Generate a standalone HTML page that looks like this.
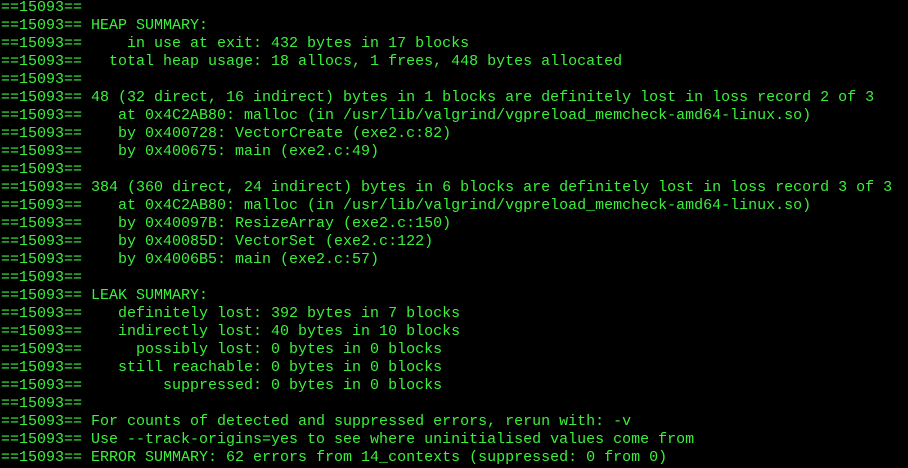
<!DOCTYPE html><html><head><style>
body{margin:0;background:#000;width:908px;height:468px;overflow:hidden}
pre{margin:0;position:absolute;left:1px;top:-1px;font-family:"Liberation Mono",monospace;font-size:15px;line-height:18px;color:#3cf03c;letter-spacing:0}
</style></head><body><pre>==15093==
==15093== HEAP SUMMARY:
==15093==     in use at exit: 432 bytes in 17 blocks
==15093==   total heap usage: 18 allocs, 1 frees, 448 bytes allocated
==15093==
==15093== 48 (32 direct, 16 indirect) bytes in 1 blocks are definitely lost in loss record 2 of 3
==15093==    at 0x4C2AB80: malloc (in /usr/lib/valgrind/vgpreload_memcheck-amd64-linux.so)
==15093==    by 0x400728: VectorCreate (exe2.c:82)
==15093==    by 0x400675: main (exe2.c:49)
==15093==
==15093== 384 (360 direct, 24 indirect) bytes in 6 blocks are definitely lost in loss record 3 of 3
==15093==    at 0x4C2AB80: malloc (in /usr/lib/valgrind/vgpreload_memcheck-amd64-linux.so)
==15093==    by 0x40097B: ResizeArray (exe2.c:150)
==15093==    by 0x40085D: VectorSet (exe2.c:122)
==15093==    by 0x4006B5: main (exe2.c:57)
==15093==
==15093== LEAK SUMMARY:
==15093==    definitely lost: 392 bytes in 7 blocks
==15093==    indirectly lost: 40 bytes in 10 blocks
==15093==      possibly lost: 0 bytes in 0 blocks
==15093==    still reachable: 0 bytes in 0 blocks
==15093==         suppressed: 0 bytes in 0 blocks
==15093==
==15093== For counts of detected and suppressed errors, rerun with: -v
==15093== Use --track-origins=yes to see where uninitialised values come from
==15093== ERROR SUMMARY: 62 errors from 14_contexts (suppressed: 0 from 0)</pre></body></html>
